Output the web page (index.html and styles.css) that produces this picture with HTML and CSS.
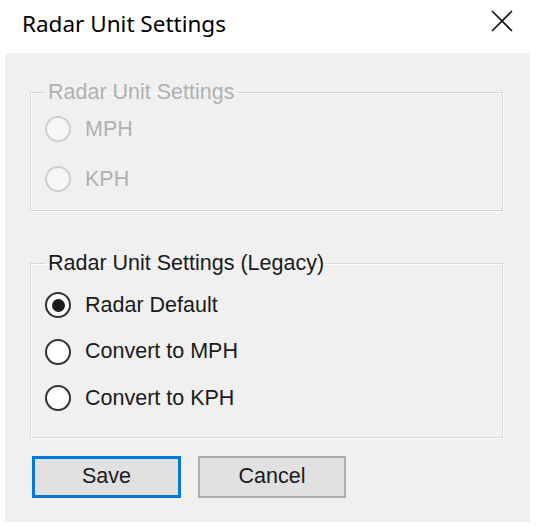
FILE: index.html
```html
<!DOCTYPE html>
<html>
<head>
<meta charset="utf-8">
<link rel="stylesheet" href="styles.css">
</head>
<body>
<div class="window">
  <div class="titlebar">
    <span class="title">Radar Unit Settings</span>
    <svg class="close" width="22" height="22" viewBox="0 0 22 22"><path d="M1 1 L21 21 M21 1 L1 21" stroke="#111" stroke-width="1.6" fill="none"/></svg>
  </div>
  <div class="panel">
    <fieldset class="group disabled">
      <legend>Radar Unit Settings</legend>
      <div class="row r50"><span class="radio"></span><span class="label">MPH</span></div>
      <div class="row r50"><span class="radio"></span><span class="label">KPH</span></div>
    </fieldset>
    <fieldset class="group legacy">
      <legend>Radar Unit Settings (Legacy)</legend>
      <div class="row r47"><span class="radio checked"></span><span class="label">Radar Default</span></div>
      <div class="row r47"><span class="radio"></span><span class="label">Convert to MPH</span></div>
      <div class="row r47"><span class="radio"></span><span class="label">Convert to KPH</span></div>
    </fieldset>
    <div class="buttons">
      <button class="btn primary">Save</button>
      <button class="btn">Cancel</button>
    </div>
  </div>
</div>
</body>
</html>
```
FILE: styles.css
```css
html, body {
  margin: 0;
  padding: 0;
  background: #ffffff;
}
.window {
  width: 537px;
  height: 526px;
  display: flex;
  flex-direction: column;
}
.titlebar {
  height: 53px;
  display: flex;
  align-items: center;
  justify-content: space-between;
  padding: 0 24px 0 22px;
  box-sizing: border-box;
}
.title {
  font-family: "Noto Sans", "Open Sans", sans-serif;
  font-size: 22.5px;
  color: #000;
  margin-top: -6px;
}
.close {
  display: block;
  margin-top: -11px;
}
.panel {
  margin: 0 7px 4px 5px;
  flex: 1;
  background: #f0f0f0;
  padding: 27px 25px 0 25px;
  font-family: "Liberation Sans", Arial, sans-serif;
  font-size: 21.5px;
  color: #1a1a1a;
}
.group {
  margin: 0;
  width: 473px;
  box-sizing: border-box;
  border: 1px solid #d6d6d6;
  box-shadow: inset 1px 1px 0 #ffffff, 1px 1px 0 #ffffff;
  padding: 0 14px 6px 14px;
}
.group legend {
  padding: 0 3px;
  line-height: 24px;
  margin-left: 0;
}
.legacy {
  margin-top: 40px;
  padding-top: 7px;
  padding-bottom: 15px;
}
.disabled {
  color: #b0b0b0;
}
.row {
  display: flex;
  align-items: center;
}
.r50 { height: 50px; }
.r47 { height: 46.5px; }
.radio {
  width: 26px;
  height: 26px;
  box-sizing: border-box;
  border-radius: 50%;
  border: 2px solid #333333;
  background: #ffffff;
  margin-right: 14px;
  display: flex;
  align-items: center;
  justify-content: center;
  flex: none;
}
.disabled .radio {
  border-color: #cfcfcf;
  background: #f7f7f7;
}
.radio.checked::after {
  content: "";
  width: 13px;
  height: 13px;
  border-radius: 50%;
  background: #1c1c1c;
}
.buttons {
  display: flex;
  gap: 17px;
  margin: 18px 0 0 2px;
}
.btn {
  width: 148px;
  height: 42px;
  box-sizing: border-box;
  background: #e1e1e1;
  border: 2px solid #adadad;
  font-family: "Liberation Sans", Arial, sans-serif;
  font-size: 21.5px;
  color: #1a1a1a;
  padding: 0;
  margin: 0;
}
.btn.primary {
  width: 149px;
  border: 3px solid #0078d7;
}
```
